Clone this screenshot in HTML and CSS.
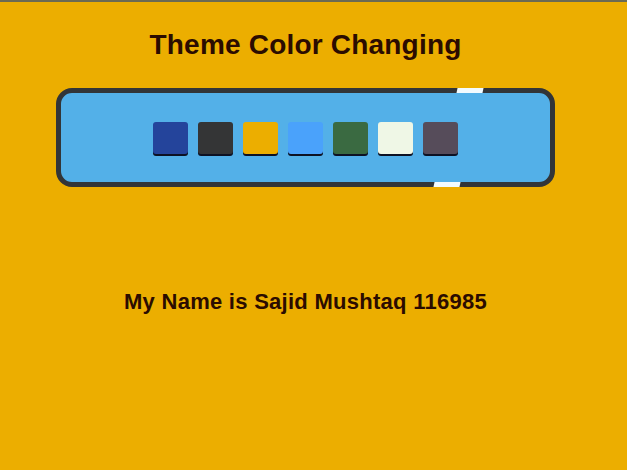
FILE: index.html
```html
<!DOCTYPE html>
<html lang="en">
<head>
<meta charset="utf-8">
<title>Theme Color Changing</title>
<link rel="stylesheet" href="styles.css">
</head>
<body>
<div class="topbar"></div>
<main class="page">
  <h1 class="title">Theme Color Changing</h1>
  <div class="panel">
    <span class="glint glint-top"></span>
    <span class="glint glint-bottom"></span>
    <div class="swatches">
      <button class="swatch c-blue"></button>
      <button class="swatch c-dark"></button>
      <button class="swatch c-yellow"></button>
      <button class="swatch c-sky"></button>
      <button class="swatch c-green"></button>
      <button class="swatch c-cream"></button>
      <button class="swatch c-plum"></button>
    </div>
  </div>
  <p class="name">My Name is Sajid Mushtaq 116985</p>
</main>
</body>
</html>
```

FILE: styles.css
```css
html, body {
  margin: 0;
  padding: 0;
}
body {
  background: #ecae00;
  height: 470px;
  overflow: hidden;
  font-family: "Liberation Sans", Arial, sans-serif;
  color: #2b0c00;
}
.topbar {
  height: 2px;
  background: #6b6a52;
}
.page {
  width: 611px;
  display: flex;
  flex-direction: column;
  align-items: center;
}
.title {
  margin: 27px 0 0;
  font-size: 28px;
  line-height: 32px;
  font-weight: bold;
  letter-spacing: 0.2px;
}
.panel {
  position: relative;
  margin-top: 27px;
  width: 489px;
  height: 89px;
  border: 5px solid #323538;
  border-radius: 16px;
  background: #53b0e8;
  display: flex;
  align-items: center;
  justify-content: center;
}
.glint {
  position: absolute;
  height: 5px;
  width: 26px;
  background: #f3fbff;
  transform: skewX(-12deg);
}
.glint-top {
  top: -5px;
  left: 396px;
}
.glint-bottom {
  bottom: -5px;
  left: 373px;
}
.swatches {
  display: flex;
  gap: 10px;
}
.swatch {
  width: 35px;
  height: 32px;
  padding: 0;
  border: none;
  border-radius: 3px;
  box-shadow: 0 2px 0 #0d1224;
}
.c-blue { background: #24449b; }
.c-dark { background: #343536; }
.c-yellow { background: #ecae00; }
.c-sky { background: #4aa2fb; }
.c-green { background: #3a6a41; }
.c-cream { background: #eff7e6; }
.c-plum { background: #564c5a; }
.name {
  margin: 102px 0 0;
  font-size: 22px;
  line-height: 26px;
  font-weight: bold;
  letter-spacing: 0.27px;
}
```
